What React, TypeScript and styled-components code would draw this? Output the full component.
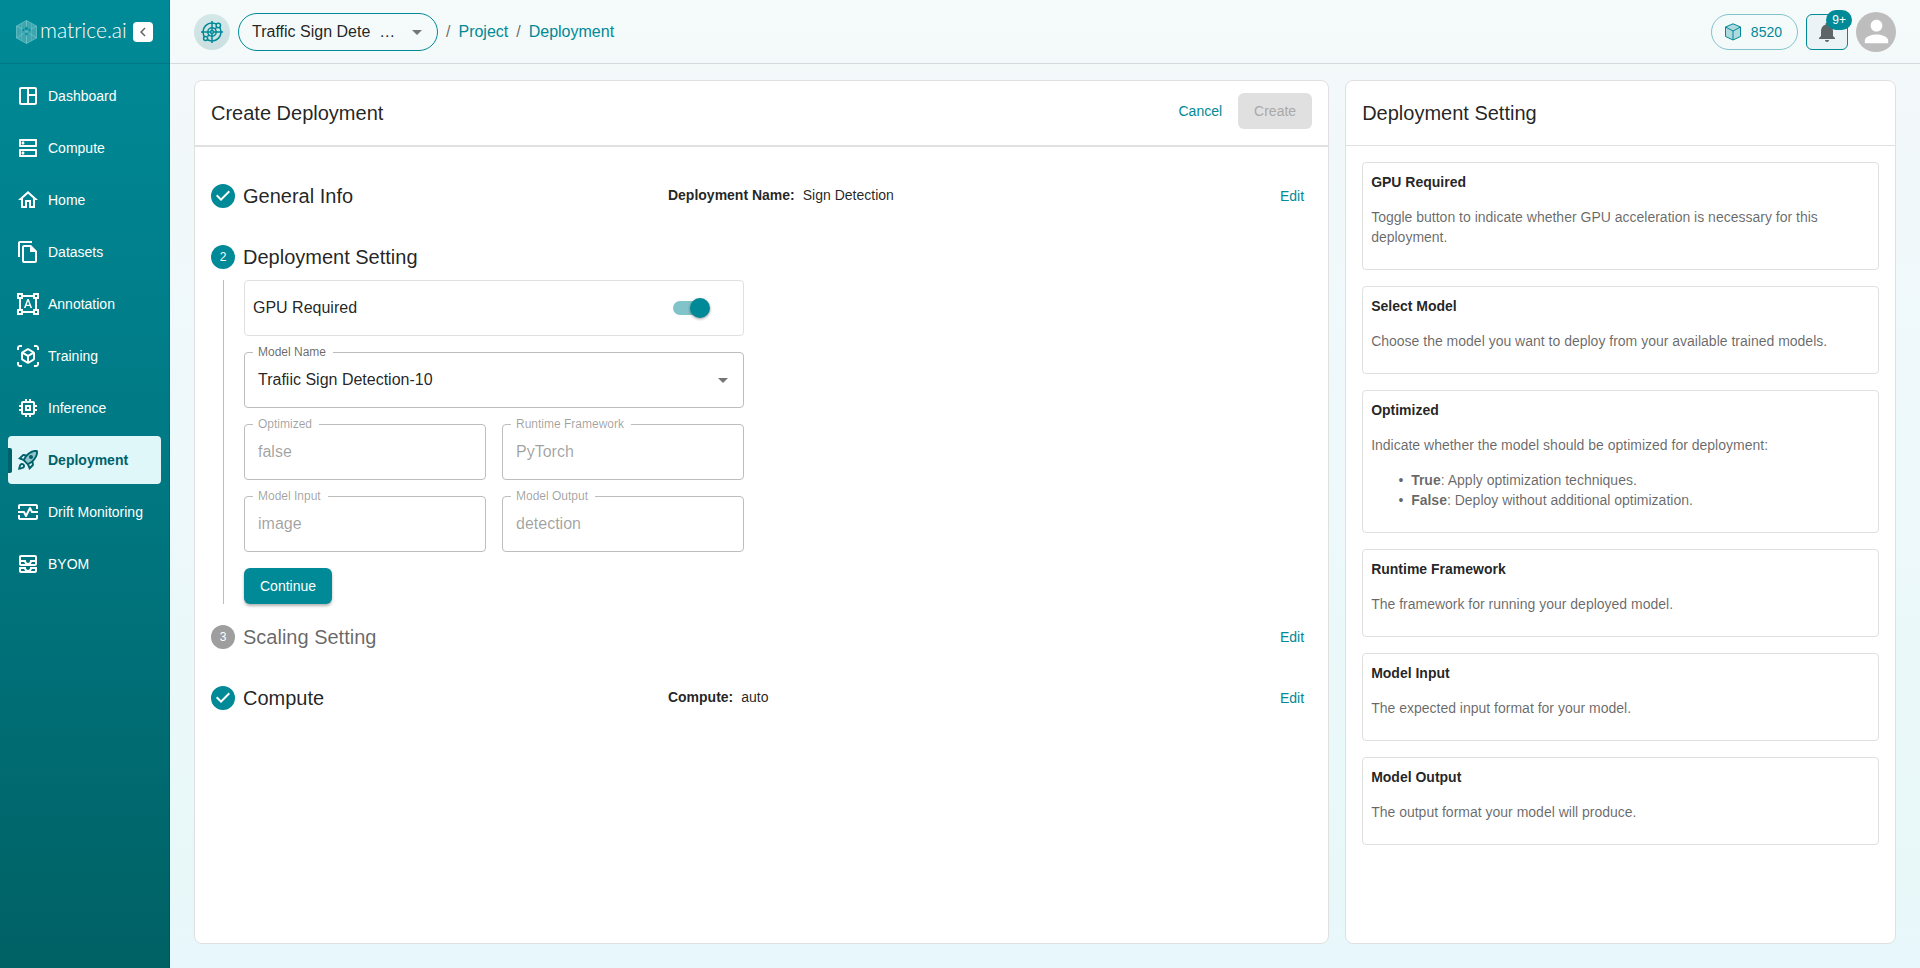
import React, { useState } from 'react';
import styled, { createGlobalStyle } from 'styled-components';
import {
  MdOutlineSpaceDashboard,
  MdOutlineDns,
  MdOutlineHome,
  MdOutlineFileCopy,
  MdOutlineFormatShapes,
  MdOutlineViewInAr,
  MdMemory,
  MdOutlineMonitorHeart,
  MdOutlineAllInbox,
  MdArrowDropDown,
  MdNotifications,
  MdPerson,
  MdChevronLeft,
} from 'react-icons/md';

const teal = '#008996';
const ink = 'rgba(0, 0, 0, 0.87)';
const muted = 'rgba(0, 0, 0, 0.6)';
const faint = 'rgba(0, 0, 0, 0.38)';
const line = '#e0e0e0';

const GlobalStyle = createGlobalStyle`
  *, *::before, *::after { box-sizing: border-box; }
  body {
    margin: 0;
    font-family: "Liberation Sans", Arial, sans-serif;
    font-size: 14px;
    line-height: 20px;
    color: ${ink};
  }
  button, input, select { font: inherit; color: inherit; }
`;

const Page = styled.div`
  display: flex;
  min-height: 100vh;
  background: linear-gradient(180deg, #f5fbfa 0%, #f2f8fa 14%, #eef9fb 45%, #e8f8f8 90%, #e8f7fc 100%);
`;

/* Sidebar */

const Sidebar = styled.aside`
  flex: 0 0 170px;
  background: linear-gradient(180deg, #008a97 0%, #007a85 45%, #006164 100%);
  border-right: 1px solid rgba(0, 0, 0, 0.12);
`;

const Brand = styled.div`
  display: flex;
  align-items: center;
  height: 64px;
  padding: 0 16px;
  border-bottom: 1px solid rgba(0, 0, 0, 0.12);
`;

const BrandName = styled.span`
  flex: 1;
  padding: 0 0 4px 3px;
  font-family: Lato, sans-serif;
  font-size: 21px;
  line-height: 24px;
  font-weight: 300;
  color: #fff;
`;

const CollapseButton = styled.button`
  display: flex;
  align-items: center;
  justify-content: center;
  width: 20px;
  height: 20px;
  padding: 0;
  border: 0;
  border-radius: 4px;
  background: #fff;
  color: #666;
  cursor: pointer;
`;

const Nav = styled.nav`
  display: flex;
  flex-direction: column;
  gap: 4px;
  padding: 8px;
`;

const NavItem = styled.a<{ $active?: boolean }>`
  position: relative;
  display: flex;
  align-items: center;
  gap: 8px;
  height: 48px;
  padding: 0 8px;
  border-radius: 4px;
  white-space: nowrap;
  text-decoration: none;
  color: ${(p) => (p.$active ? '#00626a' : '#fff')};
  background: ${(p) => (p.$active ? '#e0f7fa' : 'transparent')};
  font-weight: ${(p) => (p.$active ? 700 : 400)};

  svg { flex: none; }

  &::before {
    content: ${(p) => (p.$active ? '""' : 'none')};
    position: absolute;
    left: 0;
    top: 12px;
    width: 4px;
    height: 25px;
    border-radius: 0 2px 2px 0;
    background: #00626a;
  }
`;

/* Top bar */

const Content = styled.div`
  flex: 1;
  min-width: 0;
  display: flex;
  flex-direction: column;
`;

const TopBar = styled.header`
  display: flex;
  align-items: center;
  justify-content: space-between;
  height: 64px;
  padding: 0 24px;
  border-bottom: 1px solid #d3dcdd;
`;

const TopGroup = styled.div`
  display: flex;
  align-items: center;
  gap: 8px;
`;

const ProjectIcon = styled.span`
  display: flex;
  align-items: center;
  justify-content: center;
  width: 36px;
  height: 36px;
  border-radius: 50%;
  background: linear-gradient(180deg, #d4e8ea, #cbdfe1);
  color: ${teal};
`;

const SelectWrap = styled.div<{ $pill?: boolean }>`
  position: relative;
  width: ${(p) => (p.$pill ? '200px' : '100%')};

  svg {
    position: absolute;
    right: 9px;
    top: 50%;
    margin-top: -12px;
    color: #757575;
    pointer-events: none;
  }
`;

const PillSelect = styled.select`
  display: block;
  width: 100%;
  height: 38px;
  padding: 0 32px 0 13px;
  appearance: none;
  border: 1px solid ${teal};
  border-radius: 19px;
  background: transparent;
  font-size: 16px;
`;

const Breadcrumb = styled.nav`
  display: flex;
  gap: 8px;
  font-size: 16px;
  line-height: 24px;
  color: ${muted};
`;

const Link = styled.a`
  color: ${teal};
  text-decoration: none;
`;

const Credits = styled.button`
  display: flex;
  align-items: center;
  gap: 8px;
  height: 36px;
  padding: 0 15px 0 11px;
  border: 1px solid #80c4ca;
  border-radius: 18px;
  background: transparent;
  color: ${teal};
  cursor: pointer;
`;

const BellButton = styled.button`
  position: relative;
  display: flex;
  align-items: center;
  justify-content: center;
  width: 42px;
  height: 36px;
  padding: 0;
  border: 1px solid ${teal};
  border-radius: 6px;
  background: #ebf3f7;
  color: #5f6566;
  cursor: pointer;
`;

const Badge = styled.span`
  position: absolute;
  right: -5px;
  top: -5px;
  height: 20px;
  padding: 0 6px;
  border-radius: 10px;
  background: ${teal};
  color: #fff;
  font-size: 12px;
`;

const Avatar = styled.button`
  display: flex;
  align-items: center;
  justify-content: center;
  width: 40px;
  height: 40px;
  padding: 0;
  border: 0;
  border-radius: 50%;
  background: #bdbdbd;
  color: #fff;
  cursor: pointer;
`;

/* Panels */

const Main = styled.main`
  flex: 1;
  display: grid;
  grid-template-columns: 68fr 33fr;
  gap: 16px;
  padding: 16px 24px 24px;
`;

const Panel = styled.section`
  min-width: 0;
  border: 1px solid ${line};
  border-radius: 8px;
  background: #fff;
`;

const PanelHeader = styled.div<{ $rule: number }>`
  display: flex;
  align-items: center;
  justify-content: space-between;
  height: ${(p) => 64 + p.$rule}px;
  padding: 0 16px;
  border-bottom: ${(p) => p.$rule}px solid ${line};
`;

const Title = styled.h1`
  margin: 0;
  font-size: 20px;
  line-height: 32px;
  font-weight: 400;
`;

const Actions = styled.div`
  display: flex;
  align-items: center;
  gap: 8px;
  padding-bottom: 4px;
`;

const Button = styled.button<{ $kind?: 'text' | 'solid' }>`
  height: 36px;
  padding: 0 ${(p) => (p.$kind === 'solid' ? 16 : 8)}px;
  border: 0;
  border-radius: 6px;
  cursor: pointer;
  background: ${(p) => (p.$kind === 'solid' ? teal : 'transparent')};
  color: ${(p) => (p.$kind === 'solid' ? '#fff' : teal)};
  box-shadow: ${(p) => (p.$kind === 'solid' ? '0 2px 3px rgba(0, 0, 0, 0.3)' : 'none')};

  &:disabled {
    background: ${line};
    color: #a9a9a9;
    box-shadow: none;
    cursor: default;
  }
`;

const Steps = styled.ol`
  margin: 0;
  padding: 26px 16px 16px;
  list-style: none;
`;

const Step = styled.li<{ $open?: boolean }>`
  margin-bottom: ${(p) => (p.$open ? 10 : 16)}px;
`;

const StepRow = styled.div`
  display: flex;
  align-items: center;
  height: 45px;
`;

const StepLabel = styled.h2<{ $muted?: boolean }>`
  display: flex;
  align-items: center;
  gap: 8px;
  flex: 0 0 41.5%;
  margin: 0;
  font-size: 20px;
  line-height: 30px;
  font-weight: 400;
  color: ${(p) => (p.$muted ? muted : ink)};
`;

const StepNumber = styled.span<{ $muted?: boolean }>`
  display: flex;
  align-items: center;
  justify-content: center;
  width: 24px;
  height: 24px;
  border-radius: 50%;
  background: ${(p) => (p.$muted ? '#9e9e9e' : teal)};
  color: #fff;
  font-size: 12px;
`;

const Summary = styled.p`
  flex: 1;
  display: flex;
  gap: 8px;
  margin: 0;
  padding-bottom: 2px;
`;

const StepBody = styled.div`
  margin: 1px 0 0 12px;
  padding-left: 20px;
  border-left: 1px solid #bdbdbd;
`;

const Form = styled.form`
  display: grid;
  grid-template-columns: 1fr 1fr;
  gap: 16px;
  max-width: 500px;

  > .wide { grid-column: 1 / -1; }
  > button { justify-self: start; }
`;

const ToggleRow = styled.label`
  display: flex;
  align-items: center;
  justify-content: space-between;
  height: 56px;
  padding: 0 33px 0 8px;
  border: 1px solid ${line};
  border-radius: 4px;
  font-size: 16px;
`;

const Switch = styled.input`
  display: grid;
  align-items: center;
  width: 37px;
  height: 20px;
  margin: 0;
  appearance: none;
  cursor: pointer;

  &::before {
    content: '';
    grid-area: 1 / 1;
    width: 34px;
    height: 14px;
    border-radius: 7px;
    background: #9e9e9e;
  }
  &::after {
    content: '';
    grid-area: 1 / 1;
    width: 20px;
    height: 20px;
    border-radius: 50%;
    background: #fff;
    box-shadow: 0 1px 3px rgba(0, 0, 0, 0.4);
  }
  &:checked::before { background: #80c4ca; }
  &:checked::after { justify-self: end; background: ${teal}; }
`;

const Field = styled.div`
  position: relative;
`;

const FieldLabel = styled.label<{ $disabled?: boolean }>`
  position: absolute;
  left: 9px;
  top: -8px;
  z-index: 1;
  padding: 0 7px 0 5px;
  background: #fff;
  font-size: 12px;
  line-height: 16px;
  color: ${(p) => (p.$disabled ? faint : muted)};
`;

const ModelSelect = styled.select`
  display: block;
  width: 100%;
  height: 56px;
  padding: 0 32px 0 13px;
  appearance: none;
  border: 1px solid #bdbdbd;
  border-radius: 4px;
  background: #fff;
  font-size: 16px;
`;

const TextInput = styled.input`
  display: block;
  width: 100%;
  height: 56px;
  padding: 0 13px;
  border: 1px solid #bdbdbd;
  border-radius: 4px;
  background: #fff;
  font-size: 16px;

  &:disabled { color: ${faint}; }
`;

/* Help cards */

const HelpList = styled.div`
  display: flex;
  flex-direction: column;
  gap: 16px;
  padding: 16px;
`;

const HelpCard = styled.article`
  padding: 8px;
  border: 1px solid ${line};
  border-radius: 4px;
  color: ${muted};

  p { margin: 14px 0; }
  ul {
    margin: 15px 0 14px;
    padding-left: 40px;
    list-style-type: '•\\00a0\\00a0';
  }
`;

const HelpTitle = styled.h3`
  margin: 0;
  font-size: 14px;
  line-height: 22px;
  color: ${ink};
`;

/* Drawings */

const LogoCube = () => (
  <svg width="21" height="24" viewBox="0 0 21 24" fill="none" stroke="#7fd0d4" strokeWidth="0.6" aria-hidden="true">
    <path d="M10.5 0.5 20.5 6v12l-10 5.5L.5 18V6z" fill="#3fa5ae" />
    <path d="M.5 6l10 5.500 10-5.500M10.5.5v6M10.5 11.5v12M.5 18l7-4.500M20.5 18l-7-4.500" />
    <path d="M5.500 3.300v17.400M15.500 3.300v17.400" opacity="0.5" />
    <g fill="#00909d" stroke="none">
      <circle cx="10.5" cy="8.500" r="1.600" />
      <circle cx="7.500" cy="10" r="1.200" />
      <circle cx="13.500" cy="10" r="1.200" />
      <circle cx="10.5" cy="14" r="1.200" />
    </g>
  </svg>
);

const TargetIcon = () => (
  <svg width="22" height="22" viewBox="0 0 22 22" fill="none" stroke="currentColor" strokeWidth="1.500" aria-hidden="true">
    <circle cx="11" cy="11" r="9" />
    <circle cx="11" cy="11" r="4.200" />
    <path d="M11 0v22M0 11h22" />
    <circle cx="11" cy="11" r="1.500" fill="#d0e4e6" />
    <path d="M15.500 6.500 13.800 8.200M6.500 15.500 8.200 13.800" />
    <circle cx="17.300" cy="4.500" r="2.200" fill="#d3e7e9" />
    <circle cx="4.600" cy="17.500" r="2" fill="#cde1e3" />
  </svg>
);

const CreditCube = () => (
  <svg width="20" height="20" viewBox="0 0 20 20" stroke={teal} strokeWidth="1" strokeLinejoin="round" aria-hidden="true">
    <path d="M10 1.800 17.500 5v9.500L10 18l-7.500-3.500V5z" fill="#aed9dd" />
    <path d="M2.500 5 10 9l7.500-4M10 9v9" fill="none" />
  </svg>
);

const DoneIcon = () => (
  <svg width="24" height="24" viewBox="0 0 24 24" fill={teal} role="img" aria-label="Completed">
    <path d="M12 0a12 12 0 1 0 0 24 12 12 0 0 0 0-24zm-2 17l-5-5 1.400-1.400 3.600 3.600 7.600-7.600L19 8l-9 9z" />
  </svg>
);

const RocketIcon = () => (
  <svg width="24" height="24" viewBox="0 0 24 24" fill="currentColor" aria-hidden="true">
    <path
      opacity="0.350"
      d="M16 12.240c-1.320 1.320-3.380 2.400-4.040 2.730l-2.930-2.930c.32-.65 1.400-2.710 2.730-4.040 4.680-4.680 8.230-3.990 8.230-3.990s.69 3.550-3.990 8.230z"
    />
    <path d="M6 15c-.83 0-1.580.34-2.120.88C2.700 17.060 2 22 2 22s4.940-.7 6.120-1.880C8.660 19.580 9 18.830 9 18c0-1.660-1.340-3-3-3zm.71 3.710c-.28.28-2.170.76-2.170.76s.47-1.880.76-2.170c.17-.19.42-.3.7-.3.55 0 1 .45 1 1 0 .28-.11.53-.29.71zm10.710-5.060c6.360-6.360 4.240-11.310 4.240-11.310S16.710.22 10.350 6.580l-2.490-.5c-.65-.13-1.330.08-1.810.55L2 10.690l5 2.140L11.170 17l2.140 5 4.050-4.050c.47-.47.68-1.150.55-1.810l-.49-2.490zM7.410 10.830l-1.910-.82 1.970-1.970 1.440.29c-.57.83-1.080 1.700-1.500 2.500zm6.580 7.670-.82-1.910c.8-.42 1.670-.93 2.490-1.500l.29 1.440-1.960 1.970zM16 12.240c-1.320 1.320-3.380 2.400-4.040 2.730l-2.930-2.930c.32-.65 1.400-2.710 2.730-4.040 4.680-4.680 8.230-3.990 8.230-3.990s.69 3.550-3.990 8.230zM15 11c1.100 0 2-.9 2-2s-.9-2-2-2-2 .9-2 2 .9 2 2 2z" />
  </svg>
);

const navItems = [
  { label: 'Dashboard', icon: <MdOutlineSpaceDashboard size={24} /> },
  { label: 'Compute', icon: <MdOutlineDns size={24} /> },
  { label: 'Home', icon: <MdOutlineHome size={24} /> },
  { label: 'Datasets', icon: <MdOutlineFileCopy size={24} /> },
  { label: 'Annotation', icon: <MdOutlineFormatShapes size={24} /> },
  { label: 'Training', icon: <MdOutlineViewInAr size={24} /> },
  { label: 'Inference', icon: <MdMemory size={24} /> },
  { label: 'Deployment', icon: <RocketIcon />, active: true },
  { label: 'Drift Monitoring', icon: <MdOutlineMonitorHeart size={24} /> },
  { label: 'BYOM', icon: <MdOutlineAllInbox size={24} /> },
];

const modelFields = [
  { id: 'optimized', label: 'Optimized', value: 'false' },
  { id: 'runtime', label: 'Runtime Framework', value: 'PyTorch' },
  { id: 'model-input', label: 'Model Input', value: 'image' },
  { id: 'model-output', label: 'Model Output', value: 'detection' },
];

const helpCards: { title: string; text: string; options?: [string, string][] }[] = [
  {
    title: 'GPU Required',
    text: 'Toggle button to indicate whether GPU acceleration is necessary for this deployment.',
  },
  { title: 'Select Model', text: 'Choose the model you want to deploy from your available trained models.' },
  {
    title: 'Optimized',
    text: 'Indicate whether the model should be optimized for deployment:',
    options: [
      ['True', 'Apply optimization techniques.'],
      ['False', 'Deploy without additional optimization.'],
    ],
  },
  { title: 'Runtime Framework', text: 'The framework for running your deployed model.' },
  { title: 'Model Input', text: 'The expected input format for your model.' },
  { title: 'Model Output', text: 'The output format your model will produce.' },
];

export default function App() {
  const [gpu, setGpu] = useState(true);

  return (
    <>
      <GlobalStyle />
      <Page>
        <Sidebar>
          <Brand>
            <LogoCube />
            <BrandName>matrice.ai</BrandName>
            <CollapseButton type="button" aria-label="Collapse menu">
              <MdChevronLeft size={18} />
            </CollapseButton>
          </Brand>
          <Nav>
            {navItems.map((item) => (
              <NavItem key={item.label} href="#" $active={item.active}>
                {item.icon}
                {item.label}
              </NavItem>
            ))}
          </Nav>
        </Sidebar>

        <Content>
          <TopBar>
            <TopGroup>
              <ProjectIcon>
                <TargetIcon />
              </ProjectIcon>
              <SelectWrap $pill>
                <PillSelect aria-label="Project">
                  <option>{'Traffic Sign Dete \u00a0…'}</option>
                </PillSelect>
                <MdArrowDropDown size={24} />
              </SelectWrap>
              <Breadcrumb aria-label="Breadcrumb">
                <span>/</span>
                <Link href="#">Project</Link>
                <span>/</span>
                <Link href="#">Deployment</Link>
              </Breadcrumb>
            </TopGroup>
            <TopGroup>
              <Credits type="button">
                <CreditCube />
                8520
              </Credits>
              <BellButton type="button" aria-label="Notifications">
                <MdNotifications size={24} />
                <Badge>9+</Badge>
              </BellButton>
              <Avatar type="button" aria-label="Account">
                <MdPerson size={35} />
              </Avatar>
            </TopGroup>
          </TopBar>

          <Main>
            <Panel>
              <PanelHeader $rule={2}>
                <Title>Create Deployment</Title>
                <Actions>
                  <Button type="button">Cancel</Button>
                  <Button type="button" $kind="solid" disabled>
                    Create
                  </Button>
                </Actions>
              </PanelHeader>
              <Steps>
                <Step>
                  <StepRow>
                    <StepLabel>
                      <DoneIcon />
                      General Info
                    </StepLabel>
                    <Summary>
                      <b>Deployment Name:</b>
                      <span>Sign Detection</span>
                    </Summary>
                    <Button type="button">Edit</Button>
                  </StepRow>
                </Step>
                <Step $open>
                  <StepRow>
                    <StepLabel>
                      <StepNumber>2</StepNumber>
                      Deployment Setting
                    </StepLabel>
                  </StepRow>
                  <StepBody>
                    <Form onSubmit={(e) => e.preventDefault()}>
                      <ToggleRow className="wide">
                        GPU Required
                        <Switch type="checkbox" checked={gpu} onChange={(e) => setGpu(e.target.checked)} />
                      </ToggleRow>
                      <Field className="wide">
                        <FieldLabel htmlFor="model-name">Model Name</FieldLabel>
                        <SelectWrap>
                          <ModelSelect id="model-name">
                            <option>Trafiic Sign Detection-10</option>
                          </ModelSelect>
                          <MdArrowDropDown size={24} />
                        </SelectWrap>
                      </Field>
                      {modelFields.map((f) => (
                        <Field key={f.id}>
                          <FieldLabel htmlFor={f.id} $disabled>
                            {f.label}
                          </FieldLabel>
                          <TextInput id={f.id} value={f.value} disabled readOnly />
                        </Field>
                      ))}
                      <Button type="submit" $kind="solid">
                        Continue
                      </Button>
                    </Form>
                  </StepBody>
                </Step>
                <Step>
                  <StepRow>
                    <StepLabel $muted>
                      <StepNumber $muted>3</StepNumber>
                      Scaling Setting
                    </StepLabel>
                    <Summary />
                    <Button type="button">Edit</Button>
                  </StepRow>
                </Step>
                <Step>
                  <StepRow>
                    <StepLabel>
                      <DoneIcon />
                      Compute
                    </StepLabel>
                    <Summary>
                      <b>Compute:</b>
                      <span>auto</span>
                    </Summary>
                    <Button type="button">Edit</Button>
                  </StepRow>
                </Step>
              </Steps>
            </Panel>

            <Panel>
              <PanelHeader $rule={1}>
                <Title as="h2">Deployment Setting</Title>
              </PanelHeader>
              <HelpList>
                {helpCards.map((card) => (
                  <HelpCard key={card.title}>
                    <HelpTitle>{card.title}</HelpTitle>
                    <p>{card.text}</p>
                    {card.options && (
                      <ul>
                        {card.options.map(([name, text]) => (
                          <li key={name}>
                            <b>{name}</b>: {text}
                          </li>
                        ))}
                      </ul>
                    )}
                  </HelpCard>
                ))}
              </HelpList>
            </Panel>
          </Main>
        </Content>
      </Page>
    </>
  );
}
